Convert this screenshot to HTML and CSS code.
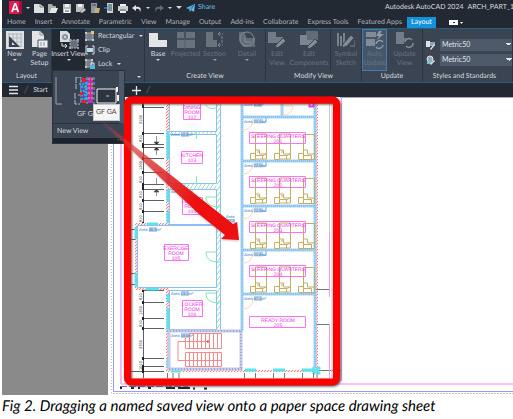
FILE: index.html
```
<!DOCTYPE html>
<html lang="en">
<head>
  <meta charset="utf-8">
  <title>Dragging a named saved view</title>
  <link rel="stylesheet" href="styles.css">
</head>
<body>
<figure class="figure">
  <div class="app">
    <header class="titlebar">
      <div class="quick">
        <button class="logo" aria-label="Application menu"><svg width="13" height="13"><rect width="13" height="13" fill="#e51a50"/><rect x="10" width="3" height="13" fill="#a80d3c"/><path d="M2 11 5.300 2h1.800l3.100 9H8.400l-.7-2H4.600l-.7 2zM5.100 7.400h2.200L6.200 4z" fill="#fff"/></svg></button>
        <i class="caret"></i>
        <button aria-label="New"><svg width="10" height="12"><path d="M0 2h6l4 3v6H0z" fill="#dcdedf"/><path d="M6 2v3h4" fill="none" stroke="#7a8087"/></svg></button>
        <button aria-label="Open"><svg width="10" height="12"><path d="M0 2h4l1 2h3v2H3l-2 5H0z" fill="#a9adb2"/><path d="M3 6h7l-2 5H1z" fill="#e4e6e7"/></svg></button>
        <button aria-label="Save"><svg width="10" height="12"><path d="M1 2h8v9H1z" fill="#b9bdc2"/><path d="M3 2h4v3H3zM2 7h6v4H2z" fill="#eef0f1"/><path d="M3 9h4" stroke="#59616c"/></svg></button>
        <button aria-label="Save As"><svg width="10" height="12"><path d="M0 2h8v8H0z" fill="#b9bdc2"/><path d="M2 2h4v3H2z" fill="#eef0f1"/><path d="m4 10 4-4 2 2-4 3z" fill="#d3cfc2" stroke="#555d68" stroke-width=".5"/></svg></button>
        <button aria-label="Open from web"><svg width="10" height="12"><path d="M1 1h6v10H1z" fill="#8e959e"/><path d="M5 6h5l-1 5H4z" fill="#c8a778"/><path d="M2 3h4" stroke="#434b57"/></svg></button>
        <button aria-label="Save to web"><svg width="10" height="12"><path d="M3 1h6v10H3z" fill="#cbd0d5"/><path d="M4 2h4v7H4z" fill="#7e8b98"/><path d="M0 6h5M3 4l2 2-2 2" fill="none" stroke="#47a5d9"/></svg></button>
        <button aria-label="Plot"><svg width="10" height="12"><path d="M2 2h6v3H2zM2 8h6v3H2z" fill="#eef0f1"/><path d="M0 4h10v5H0z" fill="#c9cdd1"/><path d="M2 8h6" stroke="#535c67"/></svg></button>
        <button aria-label="Undo"><svg width="10" height="12"><path d="m4 3-4 3 4 3V7c3-1 4 1 4 3 2-3 0-6-4-5z" fill="#e0e2e4"/></svg></button>
        <i class="caret"></i>
        <button aria-label="Redo"><svg width="10" height="12"><path d="m6 3 4 3-4 3V7C3 6 2 8 2 10 0 7 2 4 6 5z" fill="#626a75"/></svg></button>
        <i class="caret"></i>
        <i class="caret big"></i>
        <button class="share"><svg width="10" height="10"><path d="M0 5 9 1 8 9 5 7 4 9 3 6z" fill="#62bdf0"/><path d="m3 6 5-4-3 5" fill="none" stroke="#23618a" stroke-width=".7"/></svg>Share</button>
      </div>
      <div class="doc"><span>Autodesk AutoCAD 2024</span><span>ARCH_PART_10.d</span></div>
    </header>

    <nav class="tabs">
      <a href="#">Home</a><a href="#">Insert</a><a href="#">Annotate</a><a href="#">Parametric</a><a href="#">View</a><a href="#">Manage</a><a href="#">Output</a><a href="#">Add-ins</a><a href="#">Collaborate</a><a href="#">Express Tools</a><a href="#">Featured Apps</a><a href="#" class="active">Layout</a>
      <button class="mini" aria-label="Minimize ribbon"><svg width="14" height="5"><path d="M0 0h9v5H0z" fill="#fff"/><path d="M4 2h2v1H4z" fill="#222933"/><path d="M11 2h3l-1.500 2z" fill="#fff"/></svg></button>
    </nav>

    <div class="ribbon">
      <section class="panel layout">
        <div class="tools">
          <button class="tool"><svg width="18" height="18"><path d="M0 0h18v18H0z" fill="#dfe1e3"/><path d="M3 2v14M7 2v14M11 2v14M15 2v14M2 3h14M2 7h14M2 11h14M2 15h14" stroke="#b3b8be"/><path d="M3 5v11h11z" fill="#39414e"/><path d="M6 11v3h3z" fill="#dfe1e3"/></svg>New<i class="caret"></i></button>
          <button class="tool"><svg width="18" height="18"><path d="M1 0h8l4 4v12H1z" fill="#e2e4e6"/><path d="M9 0v4h4" fill="none" stroke="#8b929b"/><path d="M7 9h10v8H7z" fill="#eee" stroke="#4b5462"/><path d="M9 12h6M9 14h6" stroke="#8d949d" stroke-dasharray="2 1"/></svg>Page<br>Setup</button>
        </div>
        <h2>Layout</h2>
      </section>

      <section class="panel insert">
        <div class="tools">
          <button class="tool pressed"><svg width="20" height="18"><path d="M1 0h7l3 3v8H1z" fill="#dadddf"/><circle cx="6" cy="6" r="3" fill="#8a929c"/><circle cx="6" cy="6" r="1" fill="#e9eaeb"/><path d="M3 12v3h5M6 13l2 2-2 2" fill="none" stroke="#dfe1e3"/><path d="M11 9h8v8h-8z" fill="#66707d" stroke="#b2b7be" stroke-dasharray="2 1"/><path d="M10 8h2v2h-2zM18 8h2v2h-2zM10 16h2v2h-2zM18 16h2v2h-2z" fill="#9aa1aa"/></svg>Insert View<i class="caret"></i></button>
          <div class="list">
            <button><svg width="10" height="10"><path d="M1 2h7v7H1z" fill="#747d89" stroke="#a2a8b0"/><path d="M0 1h2v2H0zM0 8h2v2H0zM7 8h2v2H7z" fill="#c4c8cd"/><path d="M6 0h3v3H6z" fill="#f3c450"/></svg>Rectangular<i class="caret"></i></button>
            <button><svg width="10" height="10"><path d="M3 1H1v8h2M7 1h2v8H7" fill="none" stroke="#d9dcdf"/><path d="M2 3h6v4H2z" fill="#b9dceb"/></svg>Clip</button>
            <button><svg width="10" height="10"><path d="M1 1h6v7H1z" fill="#747d89" stroke="#a2a8b0"/><path d="M0 0h2v2H0zM6 0h2v2H6zM0 7h2v2H0z" fill="#c4c8cd"/><path d="M5 6h5v4H5z" fill="#52b7df"/><path d="M6 6V4h3v2" fill="none" stroke="#eee"/></svg>Lock<i class="caret"></i></button>
          </div>
        </div>
        <h2 class="launch"><i class="caret"></i></h2>
      </section>

      <section class="panel create">
        <div class="tools">
          <button class="tool"><svg width="18" height="18"><path d="M0 2h9v7h9v7H0z" fill="#e2e4e6"/></svg>Base<i class="caret"></i></button>
          <button class="tool" disabled><svg width="18" height="18"><path d="M0 1h7v6H0zM9 1h9v6H9zM0 9h18v8H0z" fill="#69717d"/><path d="M8 0v18M0 8h18" stroke="#555e6b"/></svg>Projected</button>
          <button class="tool" disabled><svg width="18" height="18"><path d="M0 1h7v8h4v7H0z" fill="#69717d"/><path d="M12 3h5M12 3l2-2M12 3l2 2M12 14h5M12 14l2-2M12 14l2 2M16 5v8" fill="none" stroke="#7c848f" stroke-dasharray="3 1"/></svg>Section<i class="caret"></i></button>
          <button class="tool" disabled><svg width="18" height="18"><path d="M1 10V1h6v6h10v9H5" fill="#626b78"/><circle cx="9" cy="8" r="7" fill="none" stroke="#858c96"/><path d="M7 4v7h6" fill="none" stroke="#858c96"/></svg>Detail<i class="caret"></i></button>
        </div>
        <h2>Create View</h2>
      </section>

      <section class="panel modify">
        <div class="tools">
          <button class="tool" disabled><svg width="18" height="18"><path d="M0 1h8v5h7v6H0z" fill="#727a86"/><path d="m8 14 7-7 3 3-7 6-4 1z" fill="#858c96" stroke="#3b4453"/></svg>Edit<br>View</button>
          <button class="tool" disabled><svg width="18" height="18"><path d="M6 0h12v9H6z" fill="#626b77"/><path d="M0 4h7v5h6v5H0z" fill="#7c848f"/><path d="m8 15 7-7 3 3-7 6-4 1z" fill="#858c96" stroke="#3b4453"/></svg>Edit<br>Components</button>
          <button class="tool symbol" disabled><svg width="18" height="18"><path d="M1 2v13M4 5v10M7 2v11" stroke="#78808b" stroke-width="2"/><path d="m6 13 8-9 3 3-7 8-5 2z" fill="#858c96" stroke="#3b4453"/><path d="M13 15h5V9" fill="none" stroke="#78808b"/></svg>Symbol<br>Sketch</button>
        </div>
        <h2>Modify View</h2>
      </section>

      <section class="panel update">
        <div class="tools">
          <button class="tool auto" disabled><svg width="18" height="18"><path d="M0 1h10v5H0zM0 8h9v7H0z" fill="#838b95"/><path d="m13 0-3 5h3l-2 4 7-6h-4l2-3z" fill="#9299a2"/><path d="M10 13a4 4 0 0 1 7-2M17 14a4 4 0 0 1-7 2" fill="none" stroke="#9299a2" stroke-width="1.500"/></svg>Auto<br>Update</button>
          <button class="tool" disabled><svg width="18" height="18"><path d="M0 1h8v6h7v6H0z" fill="#747c88"/><circle cx="13" cy="12" r="5" fill="#3b4453"/><path d="M9 11a4 4 0 0 1 7-2M17 12a4 4 0 0 1-7 3" fill="none" stroke="#858c96" stroke-width="1.500"/></svg>Update<br>View</button>
        </div>
        <h2>Update</h2>
      </section>

      <section class="panel styles">
        <div class="tools">
          <label for="viewStyle"><svg width="9" height="10"><path d="M0 1h4v6H0z" fill="#dfe2e5"/><path d="M4 2h5v4H4z" fill="#89a7b9"/><path d="m4 9 4-5 1 1-4 5z" fill="#e7dfd0"/></svg></label>
          <select id="viewStyle" aria-label="Section view style"><option>Metric50</option></select>
          <label for="detailStyle"><svg width="9" height="10"><circle cx="4" cy="4" r="3" fill="#9da9b3" stroke="#dfe2e5"/><path d="M1 6h5v3H1z" fill="#79bdd8"/><path d="m4 9 4-4 1 1-4 4z" fill="#e7dfd0"/></svg></label>
          <select id="detailStyle" aria-label="Detail view style"><option>Metric50</option></select>
        </div>
        <h2>Styles and Standards</h2>
      </section>
    </div>

    <div class="filetabs">
      <button aria-label="Menu"><svg width="10" height="10"><path d="M0 1.500h9M0 5h9M0 8.500h9" stroke="#e3e5e8" stroke-width="1.300"/></svg></button>
      <i class="slash">/</i>
      <a href="#">Start</a>
      <button class="add" aria-label="New drawing"><svg width="9" height="9"><path d="M4.500 0v9M0 4.500h9" stroke="#e3e5e8" stroke-width="1.300"/></svg></button>
      <i class="slash">/</i>
    </div>

    <div class="gallery">
      <div class="thumbs">
        <svg width="66" height="28">
          <path d="M3 0v27h6" fill="none" stroke="#9ca2aa"/>
          <path d="M23 0h5M23 0v12M22 16v11h5M28 0v26" fill="none" stroke="#b6bac0" stroke-dasharray="6 1"/>
          <path d="M28 1h7v25h-7z" fill="#3b5fb9"/>
          <path d="M28 4h4M26 7h6M28 10h6M27 14h6M25 18h7M28 22h5M33 5v17" stroke="#53d7e7" stroke-dasharray="2 1"/>
          <path d="M29 1h4v4h-4zM29 23h4v3h-4zM27 15h3v3h-3z" fill="#f21c28"/>
          <path d="M35 0h5v26h-5z" fill="#c72bb3"/>
          <path d="M35 2h5M35 7h5M35 11h5M35 16h5M35 21h5" stroke="#eebf48" stroke-dasharray="2 1"/>
          <path d="M34 0v27M41 0v27" stroke="#4fc8e0" stroke-dasharray="3 2"/>
          <path d="M44 12h19v14H44z" fill="#2c343f" stroke="#f4f4f4"/>
          <path d="M64 10v5M65 18v6" stroke="#f4f4f4" stroke-width="2"/>
          <path d="M53 19h3" stroke="#b6bac0"/>
        </svg>
        <span>GF GA</span>
      </div>
      <button>New View</button>
      <div class="grip">⋯</div>
    </div>
    <div class="tip">GF GA</div>

    <div class="workspace">
      <svg class="drawing" width="100%" height="298">
        <defs>
          <pattern id="redHatch" width="3" height="3" patternUnits="userSpaceOnUse"><path d="M0 0h3v3H0z" fill="#ffe6e6"/><path d="m0 3 3-3" stroke="#f48484"/></pattern>
          <pattern id="greenHatch" width="4" height="6" patternUnits="userSpaceOnUse"><path d="m0 6 4-6" stroke="#8fe0bb"/></pattern>
          <g id="bed" fill="none" stroke="#c4ae62"><path d="M5.500 0h11v25h-11zM.5 19.500h5v6h-5zM5.500 16h4v4h7M5.500 21.500h7v4M7 18h3M12 22l4-2"/></g>
          <g id="quarters">
            <use href="#bed" x="250" y="18"/><use href="#bed" x="274" y="18"/><path d="M303.500 18.500h11v25h-11zM298.500 37.500h5v6h-5zM303.500 34h4v4h7M303.500 39.500h8v4" fill="none" stroke="#c4ae62"/>
            <path d="M249.500 16.500h56v11h-56z" fill="none" stroke="#fb72f5"/>
            <path d="M242 14c7 0 11-4 11-11" fill="none" stroke="#ffd4ae"/>
            <path d="M262 6.500h4v-5" fill="none" stroke="#7db9ef"/>
            <path d="M254 2.500h9v5h-9z" fill="#bfd2e4"/>
          </g>
        </defs>
        <!-- groups below use window coordinates -->
        <g transform="translate(-2 -97)">
          <path d="M108 97h2000v298H108z" fill="#fff"/>
          <path d="M340 97.500h2000" stroke="#a8a8b4"/>
          <path d="M111.500 143v252" stroke="#b9b9d8" stroke-dasharray="1 2"/>
          <path d="M113.500 143v248.500h2000" fill="none" stroke="#9b9bf5"/>
          <path d="M121 143v241" stroke="#f9b8f5" stroke-width="2"/>
          <path d="M121 384h2000" stroke="#fdc3fa" stroke-width="2"/>
          <path d="M113 393.500h2000" stroke="#c4c4c4" stroke-dasharray="2 1"/>
          <path d="M120 388h70M193 388.500h14" stroke="#222" stroke-width="2" stroke-dasharray="2 9 3 4 2 8 3 15 9 3 14 9"/>
          <path d="M120 386.500h68" stroke="#6868ea" stroke-dasharray="7 2"/>

          <!-- dimensions -->
          <path d="M143 107.500h21M143 133.500h21M143 144.500h21M143 147.500h21M143 158.500h21M143 172.500h21M143 184.500h21M143 189.500h21M143 200.500h21M143 211.500h21M143 223.500h21M143 290.500h21M143 302.500h21M143 318.500h21M143 328.500h21M143 358.500h21M143 366.500h21M130 371.500h34M130 229.500h5M130 239.500h5M130 273.500h5M130 284.500h5M143.500 103v120M143.500 290v88" fill="none" stroke="#606060"/>
          <path d="M143 103v5M143 132v3M143 143v5M143 157v3M143 171v3M143 183v7M143 199v3M143 210v3M143 222v2M143 290v2M143 301v3M143 317v3M143 327v3M143 357v3M143 365v8" fill="none" stroke="#222" stroke-width="2"/>
          <path d="M156.500 136v7M156.500 149v6M156.500 178v6M156.500 190v6M154 142h5l-2.500 3zM154 150h5l-2.500-3zM154 192h5l-2.500-3z" fill="#222" stroke="#666" stroke-width=".7"/>
          <g class="dims"><text transform="translate(142 124) rotate(-90)">2100</text><text transform="translate(142 142) rotate(-90)">810</text><text transform="translate(142 170) rotate(-90)">1200</text><text transform="translate(142 183) rotate(-90)">810</text><text transform="translate(142 198) rotate(-90)">810</text><text transform="translate(142 210) rotate(-90)">810</text><text transform="translate(142 222) rotate(-90)">810</text><text transform="translate(142 300) rotate(-90)">810</text><text transform="translate(142 315) rotate(-90)">1350</text><text transform="translate(142 327) rotate(-90)">810</text><text transform="translate(142 349) rotate(-90)">2350</text><text transform="translate(142 370) rotate(-90)">1010</text></g>

          <!-- west walls -->
          <path d="M166 103h3v121h-3zM135 223h2v67h-2zM136 223h33v2h-33zM135 288h34v2h-34zM166 290h3v81h-3zM166 370h150v2H166zM316 103h2v267h-2z" fill="url(#redHatch)"/>
          <path d="M168 131v28M168 173v11M168 189v13M168 211v12M136 239v-12M136 273v14M147 224h11M146 289h13M168 294v8M168 308v22M168 358v10M171 371h10M245 370h11M273 370h12M302 370h13M313 367l7 7M320 367l-7 7" fill="none" stroke="#55e6ef" stroke-width="3"/>
          <path d="M217 103h4v227h-4zM170 131h46v3h-46zM170 184h46v5h-46z" fill="url(#greenHatch)"/>
          <g class="wall"><path d="M169.500 103.500h47v28h-47zM169.500 134.500h47v49h-47zM169.500 189.500h47v35h-47zM137.500 225.500h79v62h-79zM169.500 290.500h47v39h-47z"/><path d="M220.500 103v227"/></g>
          <path d="M167 331h75M241 331v39M169 369h73M169 333v37" fill="none" stroke="#c3caea" stroke-width="3"/>
          <path d="M167 331h75M241 331v39M169 369h73" fill="none" stroke="#7c88cf" stroke-dasharray="1 2"/>
          <path d="M206 105c1 3 5 4 10 3M216 197h-10c0 6 4 10 14 10M216 252h-10c0 7 4 10 14 10M216 293h-10c0 7 4 10 14 10M196.500 131v8M196.500 176v8" fill="none" stroke="#7ceaad"/>

          <!-- stair -->
          <g fill="none" stroke="#f38b8b"><path d="M185.500 333.500h36v15h-36zM185.500 352.500h36v14h-36zM208 341.500h-30v19h43"/><path d="M189.500 333v15M193.500 333v15M197.500 333v15M201.500 333v15M205.500 333v15M209.500 333v15M213.500 333v15M217.500 333v15M189.500 352v14M193.500 352v14M197.500 352v14M201.500 352v14M205.500 352v14M209.500 352v14M213.500 352v14M217.500 352v14"/><path d="M208 340v3" stroke="#d22"/></g>

          <!-- east rooms -->
          <g class="double"><path d="M242 103v228M241 117h74M241 161h74M241 206h74M241 250h74M241 294h74M282 103v13M315 103v266"/></g>
          <g class="dots"><path d="M242 103v228M243 117h71M243 161h71M243 206h71M243 250h71M243 294h71M315 103v266"/></g>
          <path d="M283 115c6 0 10-4 10-9h-10" fill="none" stroke="#ffd4ae"/>
          <path d="M309.500 102.500h4v4h-4z" fill="none" stroke="#e83de0" stroke-width="2"/>
          <use href="#quarters" y="116"/><use href="#quarters" y="160"/><use href="#quarters" y="205"/><use href="#quarters" y="249"/>
          <path d="M242 309c7 0 11-4 11-11" fill="none" stroke="#ffd4ae"/>
          <path d="M316.500 289.500h13M316.500 324.500h13M319 370.500h23M167.500 373v5M173 373v5M179 373v5M244.500 373v5M255.500 373v5M273.500 373v5M284.500 373v5M302.500 373v5M313.500 373v5M317 373v5" fill="none" stroke="#777"/>
          <path d="M329.500 103v130M332 103v275" stroke="#c8c8c8"/>
          <path d="M329.500 233v64M329.500 324v54M341.500 97v284" stroke="#f19aee"/>

          <g class="boxes"><path d="M183.500 103.500h17v16h-17zM181.500 151.500h21v12h-21zM182.500 197.500h20v17h-20zM164.500 244.500h24v16h-24zM182.500 300.500h20v16h-20zM249.500 316.500h56v11h-56z"/></g>
          <g class="rooms">
            <text x="192" y="109">DINING</text><text x="192" y="114">ROOM</text><text x="192" y="119">102</text>
            <text x="192" y="157">KITCHEN</text><text x="192" y="162">103</text>
            <text x="192" y="203">LOCKER</text><text x="192" y="208">ROOM</text><text x="192" y="213">104</text>
            <text x="176" y="250">EXERCISE</text><text x="176" y="255">ROOM</text><text x="176" y="260">105</text>
            <text x="192" y="306">LOCKER</text><text x="192" y="311">ROOM</text><text x="192" y="316">106</text>
            <text x="278" y="138">SLEEPING QUARTERS</text><text x="278" y="143">201</text>
            <text x="278" y="182">SLEEPING QUARTERS</text><text x="278" y="187">202</text>
            <text x="278" y="227">SLEEPING QUARTERS</text><text x="278" y="232">203</text>
            <text x="278" y="271">SLEEPING QUARTERS</text><text x="278" y="276">204</text>
            <text x="278" y="322">READY ROOM</text><text x="278" y="327">205</text>
          </g>
          <g class="areas">
            <path d="M181 132h8v5h-8zM181 189h8v5h-8zM149 227h8v5h-8zM181 291h8v5h-8zM181 333h8v5h-8zM254 102h8v5h-8zM254 296h8v5h-8zM227 219h8v4h-8z"/>
            <text x="171" y="136">Area 18.8m²</text><text x="171" y="193">Area 11.6m²</text><text x="139" y="231">Area 36.3m²</text><text x="171" y="295">Area 13.1m²</text><text x="171" y="337">Area 18.5m²</text>
            <text x="244" y="106">Area 8.9m²</text><text x="244" y="123">Area 21.1m²</text><text x="244" y="167">Area 22.0m²</text><text x="244" y="212">Area 21.3m²</text><text x="244" y="256">Area 21.8m²</text><text x="244" y="300">Area 37.1m²</text><text x="226" y="218">Area</text><text x="227" y="222">37.2</text>
          </g>
        </g>
      </svg>
      <svg class="callout" width="100%" height="298">
        <defs>
          <linearGradient id="fade" gradientUnits="userSpaceOnUse" x1="95" y1="115" x2="220" y2="225"><stop offset="0" stop-color="#e22" stop-opacity=".15"/><stop offset=".3" stop-color="#e22b2b" stop-opacity=".6"/><stop offset=".8" stop-color="#ee1010"/></linearGradient>
        </defs>
        <g transform="translate(-2 -97)">
          <rect class="frame" x="127.500" y="100" width="209" height="282" rx="4"/>
          <path class="arrow" d="M95 115 233 224 237 222 239 240 221 239 225 235 200 215 167 184z" fill="url(#fade)"/>
        </g>
      </svg>
    </div>
  </div>
  <figcaption>Fig 2. Dragging a named saved view onto a paper space drawing sheet</figcaption>
</figure>
</body>
</html>
```

FILE: styles.css
```
* {
  box-sizing: border-box;
}

body {
  margin: 0;
  background: #fff;
  overflow-x: hidden;
  text-rendering: geometricPrecision;
}

.figure {
  margin: 0;
  padding-left: 2px;
}

.app {
  position: relative;
  overflow: hidden;
  background: #222933;
  color: #d5d9de;
  font: 7px/9px Lato, "Open Sans", sans-serif;
}

button {
  display: flex;
  align-items: center;
  padding: 0;
  border: 0;
  background: none;
  color: inherit;
  font: inherit;
  text-rendering: inherit;
}

a {
  color: inherit;
  text-decoration: none;
}

svg {
  display: block;
  flex: none;
}

.caret {
  width: 0;
  height: 0;
  border: 2px solid transparent;
  border-top-color: #d5d9de;
  border-bottom: 0;
}

.caret.big {
  border-width: 3px;
  border-bottom: 0;
}

/* title bar */
.titlebar {
  display: flex;
  height: 17px;
  padding-bottom: 2px;
  align-items: center;
}

.quick {
  display: flex;
  flex: none;
  width: 383px;
  padding-left: 7px;
  align-items: center;
  gap: 4px;
}

.share {
  gap: 2px;
  color: #62bdf0;
}

.doc {
  display: flex;
  gap: 4px;
  white-space: nowrap;
}

.tabs {
  display: flex;
  height: 11px;
  padding-left: 5px;
  gap: 9px;
  line-height: 11px;
  white-space: nowrap;
  color: #adb2ba;
}

.tabs .active {
  margin: 0 -4px;
  padding: 0 4px;
  background: #1492dc;
  color: #fff;
}

.mini {
  margin-left: 8px;
}

/* ribbon */
.ribbon {
  display: flex;
  height: 55px;
  border-top: 1px solid #236080;
  border-bottom: 1px solid #236080;
  background: #3b4453;
}

.panel {
  display: flex;
  flex: none;
  flex-direction: column;
  border-right: 1px solid #2c3440;
}

.panel h2 {
  margin: 0;
  font: inherit;
  line-height: 11px;
  text-align: center;
  white-space: nowrap;
}

.panel h2.launch {
  display: flex;
  height: 11px;
  padding-right: 3px;
  align-items: center;
  justify-content: flex-end;
}

.tools {
  display: grid;
  height: 42px;
}

.tool {
  flex-direction: column;
  padding-top: 2px;
  text-align: center;
  white-space: nowrap;
}

.tool svg {
  margin-bottom: 1px;
}

.tool:disabled {
  color: #69727f;
}

.tool:disabled .caret {
  border-top-color: #929aa4;
}

.layout {
  width: 50px;
}

.layout .tools {
  grid-template-columns: 25px 25px;
}

.insert {
  width: 93px;
}

.insert .tools {
  grid-template-columns: 33px 1fr;
}

.pressed {
  background: #222933;
}

.list {
  display: flex;
  flex-direction: column;
  justify-content: space-around;
}

.list button {
  gap: 3px;
}

.list .caret {
  margin-left: 2px;
}

.create {
  width: 121px;
}

.create .tools {
  grid-template-columns: 26px 29px 29px 1fr;
}

.modify {
  width: 96px;
}

.modify .tools {
  grid-template-columns: 22px 42px 1fr;
}

.symbol {
  border-left: 1px solid #2c3440;
}

.update {
  width: 61px;
}

.update .tools {
  grid-template-columns: 25px 1fr;
}

.auto {
  outline: 1px solid #4a7ca4;
  outline-offset: -1px;
  background: #44566c;
}

.styles {
  flex: 1;
  min-width: 88px;
}

.styles .tools {
  grid-template-columns: 12px 1fr;
  padding: 9px 0 5px 3px;
  gap: 2px;
  align-items: center;
}

.styles select {
  width: 100%;
  height: 12px;
  padding: 0 2px;
  border: 0;
  border-radius: 0;
  appearance: none;
  background: #4d5869 conic-gradient(from -45deg at 50% 100%, #e2e5e8 90deg, transparent 0) right 1px center / 5px 3px no-repeat;
  background-image: linear-gradient(45deg, transparent 50%, #e2e5e8 0), linear-gradient(-45deg, transparent 50%, #e2e5e8 0);
  background-position: right 3px center, right 0 center;
  background-size: 3px 3px;
  color: #e2e5e8;
  font: inherit;
}

.styles h2 {
  padding-right: 6px;
}

/* drawing tabs */
.filetabs {
  display: flex;
  height: 14px;
  padding-left: 7px;
  align-items: center;
  gap: 5px;
}

.slash {
  color: #5b6470;
  font-size: 10px;
}

.filetabs .add {
  margin-left: 79px;
}

/* insert view gallery, drops over the drawing */
.gallery {
  position: absolute;
  z-index: 2;
  top: 70px;
  left: 50px;
  width: 73px;
  border: 1px solid #2a323e;
  background: #3b4453;
}

.thumbs {
  height: 53px;
  padding-top: 6px;
  border-right: 5px solid #4d586a;
  border-bottom: 1px solid #29313c;
}

.thumbs span {
  display: block;
  margin: 5px 0 0 24px;
}

.gallery button {
  height: 14px;
  padding-left: 4px;
}

.grip {
  height: 5px;
  background: #1c232c;
  line-height: 4px;
  text-align: right;
}

.tip {
  position: absolute;
  z-index: 4;
  top: 104px;
  left: 91px;
  padding: 3px 2px;
  border: 1px solid #c8c8c8;
  background: #f5f5f5;
  color: #444;
}

.workspace {
  position: relative;
  background: #8a8a8a;
}

.callout {
  position: absolute;
  z-index: 3;
  top: 0;
  left: 0;
  overflow: visible;
  pointer-events: none;
}

.frame {
  fill: none;
  stroke: #f00;
  stroke-width: 7px;
  filter: drop-shadow(1px 1px 1px #555);
}

.arrow {
  filter: drop-shadow(0 1px 1px #8888);
}

.wall {
  fill: none;
  stroke: #8cc0f0;
}

.double {
  fill: none;
  stroke: #a4d4f5;
  stroke-width: 3px;
}

.dots {
  fill: none;
  stroke: #6db6e6;
  stroke-dasharray: 1 1;
}

.boxes {
  fill: none;
  stroke: #fb72f5;
}

.rooms {
  fill: #f02be8;
  font: 5px "Liberation Sans", sans-serif;
  text-anchor: middle;
}

.areas {
  fill: #1877d2;
  font: 4px "Liberation Sans", sans-serif;
}

.areas path {
  fill: #bfd2e4;
}

.dims {
  fill: #333;
  font: 4px "Liberation Sans", sans-serif;
}

figcaption {
  color: #000;
  font: italic 15px/22px Lato, sans-serif;
  white-space: nowrap;
}
```
